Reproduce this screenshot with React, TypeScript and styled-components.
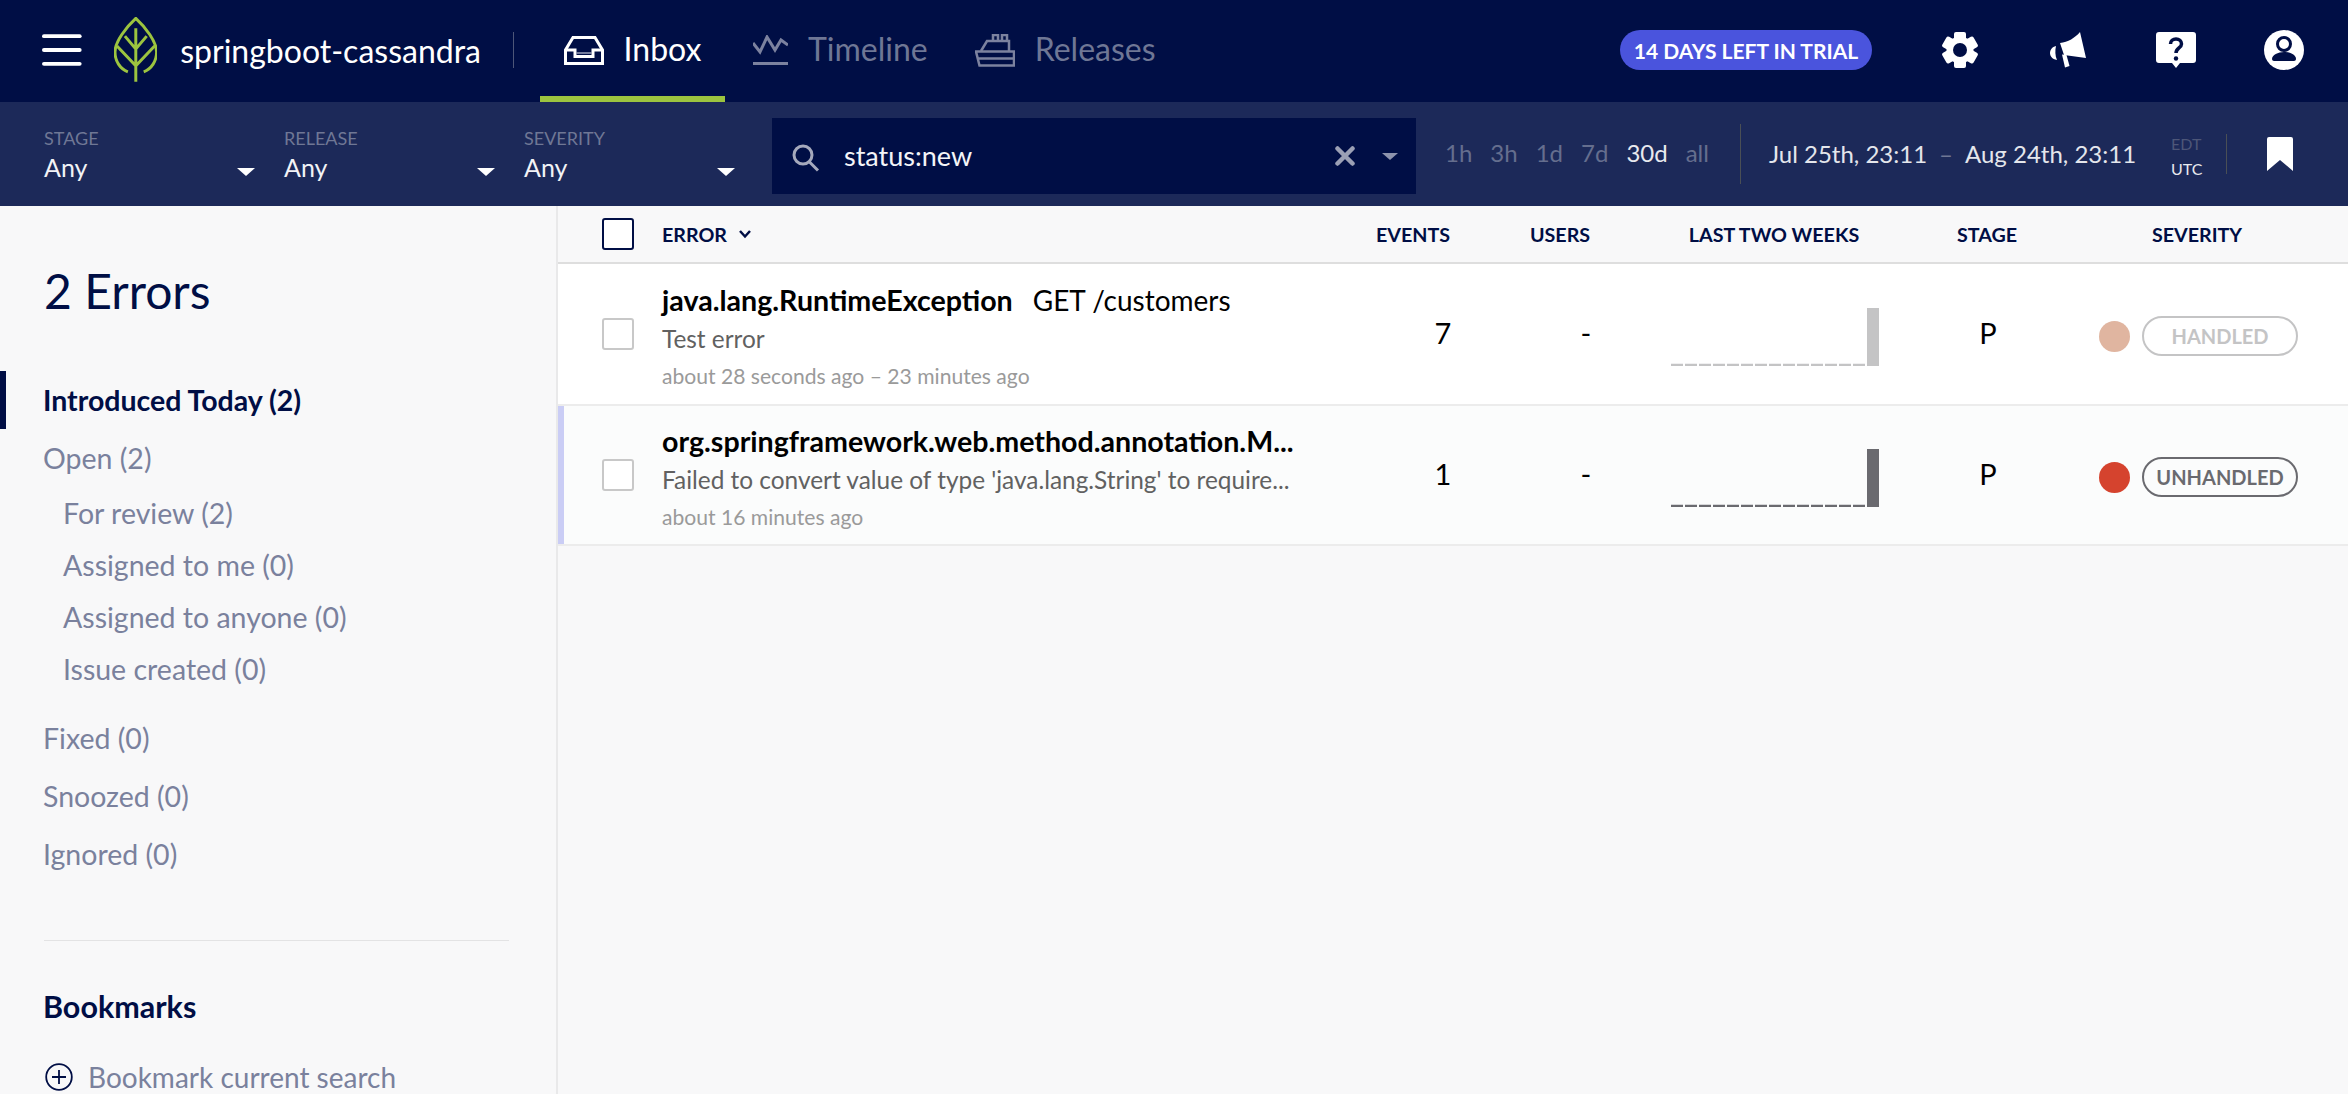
import React from 'react';
import styled, { createGlobalStyle } from 'styled-components';

const FONT = `"Lato", "Liberation Sans", sans-serif`;

const Global = createGlobalStyle`
  html, body { margin: 0; padding: 0; height: 100%; background: #f8f8f9; overflow: hidden; }
  body { font-family: ${FONT}; }
  * { box-sizing: border-box; }
`;

const Page = styled.div`
  width: 2348px;
  height: 1094px;
  overflow: hidden;
  display: flex;
  flex-direction: column;
`;

const TopNav = styled.header`
  height: 102px;
  flex: none;
  background: #000e45;
  display: flex;
  align-items: stretch;
  padding-left: 42px;
  color: #fff;
`;

const Brand = styled.div`
  display: flex;
  align-items: center;
  width: 472px;
  flex: none;
  margin-top: -2px;
`;

const ProjectName = styled.span`
  font-size: 32px;
  margin-left: 23px;
  white-space: nowrap;
`;

const BrandDivider = styled.span`
  width: 1px;
  height: 36px;
  background: #4d5678;
  margin-left: 32px;
`;

const NavTabs = styled.nav`
  display: flex;
  margin-left: 26px;
`;

const NavTab = styled.a<{ $active?: boolean }>`
  width: ${p => (p.$active ? '185px' : 'auto')};
  margin-right: ${p => (p.$active ? '28px' : '47px')};
  display: flex;
  align-items: center;
  justify-content: ${p => (p.$active ? 'center' : 'flex-start')};
  gap: 20px;
  font-size: 32px;
  color: ${p => (p.$active ? '#fff' : '#6f7795')};
  border-bottom: 6px solid ${p => (p.$active ? '#9cc43f' : 'transparent')};
  & > svg { margin-top: 4px; }
`;

const NavRight = styled.div`
  margin-left: auto;
  display: flex;
  align-items: center;
  padding: 0 44px 0 0;
  margin-top: -2px;
`;

const TrialPill = styled.span`
  width: 252px;
  height: 40px;
  border-radius: 20px;
  background: #4a54dd;
  font-size: 21px;
  font-weight: 700;
  display: flex;
  align-items: center;
  justify-content: center;
  white-space: nowrap;
  margin-right: 70px;
`;

const IconSlot = styled.span<{ $w: number; $mr?: number }>`
  width: ${p => p.$w}px;
  margin-right: ${p => p.$mr ?? 0}px;
  display: flex;
  justify-content: center;
`;

const FilterBar = styled.div`
  height: 104px;
  flex: none;
  background: #1c2959;
  display: flex;
  align-items: center;
  padding-left: 44px;
  color: #fff;
`;

const FilterSelect = styled.div`
  width: 240px;
  flex: none;
  position: relative;
  height: 56px;
  margin-top: 4px;
`;

const FilterLabel = styled.div`
  font-size: 18px;
  line-height: 20px;
  color: #6f7795;
`;

const FilterValue = styled.div`
  font-size: 25px;
  line-height: 32px;
  margin-top: 3px;
  color: #f2f3f6;
`;

const Caret = styled.span<{ $color?: string; $size?: number }>`
  display: block;
  width: 0;
  height: 0;
  border-left: ${p => p.$size ?? 9}px solid transparent;
  border-right: ${p => p.$size ?? 9}px solid transparent;
  border-top: ${p => ((p.$size ?? 9) * 0.85).toFixed(0)}px solid ${p => p.$color ?? '#fff'};
`;

const SelectCaret = styled(Caret)`
  position: absolute;
  right: 29px;
  top: 40px;
`;

const SearchBox = styled.div`
  width: 644px;
  height: 76px;
  flex: none;
  margin: 4px 0 0 8px;
  background: #000e45;
  display: flex;
  align-items: center;
  padding: 0 18px 0 20px;
`;

const SearchText = styled.span`
  font-size: 27px;
  margin-left: 24px;
  margin-bottom: 2px;
  flex: 1;
  color: #f4f5f8;
`;

const TimeButtons = styled.div`
  display: flex;
  margin-left: 29px;
  gap: 18px;
  width: 296px;
  flex: none;
  height: 60px;
  align-items: center;
  border-right: 1px solid #4a4f55;
  padding-bottom: 4px;
`;

const TimeButton = styled.span<{ $active?: boolean }>`
  font-size: 24px;
  color: ${p => (p.$active ? '#e8e9ee' : '#656e8e')};
`;

const DateRange = styled.div`
  margin-left: 28px;
  width: 402px;
  flex: none;
  display: flex;
  gap: 12px;
  font-size: 24px;
  color: #e4e6ec;
  white-space: nowrap;
  padding-bottom: 2px;
`;

const DateDash = styled.span`
  color: #6f7795;
`;

const Zones = styled.div`
  display: flex;
  flex-direction: column;
  gap: 8px;
  width: 56px;
  flex: none;
  height: 40px;
  padding-top: 3px;
  justify-content: center;
  border-right: 1px solid #4a4f55;
`;

const Zone = styled.span<{ $active?: boolean }>`
  font-size: 16px;
  line-height: 17px;
  color: ${p => (p.$active ? '#e8e9ee' : '#4d5678')};
`;

const BookmarkSlot = styled.span`
  margin-left: 40px;
  display: flex;
`;

const Body = styled.div`
  flex: 1;
  display: flex;
  min-height: 0;
`;

const Sidebar = styled.aside`
  width: 558px;
  flex: none;
  background: #f8f8f9;
  border-right: 2px solid #e9e9ea;
  padding: 56px 0 0 0;
`;

const SideTitle = styled.h1`
  margin: 0 0 51px 44px;
  font-size: 48px;
  line-height: 58px;
  font-weight: 400;
  color: #000e45;
`;

const SideItem = styled.div<{ $active?: boolean; $sub?: boolean; $mt?: number; $h?: number }>`
  font-size: 28.5px;
  height: ${p => p.$h ?? 58}px;
  margin-top: ${p => p.$mt ?? 0}px;
  display: flex;
  align-items: center;
  padding-left: ${p => (p.$sub ? 63 : p.$active ? 37 : 43)}px;
  color: ${p => (p.$active ? '#000e45' : '#7a819d')};
  font-weight: ${p => (p.$active ? 700 : 400)};
  border-left: ${p => (p.$active ? '6px solid #000e45' : 'none')};
`;

const SideDivider = styled.hr`
  border: none;
  height: 1px;
  background: #e3e3e4;
  margin: 57px 47px 0 44px;
`;

const SideHeading = styled.h2`
  margin: 47px 0 0 43px;
  font-size: 30.5px;
  line-height: 36px;
  font-weight: 700;
  color: #000e45;
`;

const AddBookmark = styled.div`
  margin: 36px 0 0 45px;
  display: flex;
  align-items: center;
  gap: 15px;
  font-size: 28px;
  color: #7a819d;
`;

const Main = styled.main`
  flex: 1;
  min-width: 0;
`;

const TableHead = styled.div`
  display: grid;
  grid-template-columns: 104px 678px 146px 148px 280px 146px 274px;
  align-items: center;
  height: 58px;
  background: #f8f8f9;
  border-bottom: 2px solid #dedede;
`;

const HeadCell = styled.div<{ $center?: boolean }>`
  font-size: 19.7px;
  font-weight: 700;
  color: #000e45;
  display: flex;
  align-items: center;
  gap: 12px;
  justify-content: ${p => (p.$center ? 'center' : 'flex-start')};
  white-space: nowrap;
`;

const CheckCell = styled.div`
  display: flex;
  justify-content: flex-end;
  padding-right: 28px;
`;

const Check = styled.span<{ $head?: boolean }>`
  width: 32px;
  height: 32px;
  border-radius: 3px;
  background: #fff;
  border: 2px solid ${p => (p.$head ? '#000e45' : '#c8c8c8')};
`;

const Row = styled.div<{ $unseen?: boolean }>`
  display: grid;
  grid-template-columns: 104px 678px 206px 80px 282px 160px 1fr;
  align-items: center;
  height: ${p => (p.$unseen ? 140 : 142)}px;
  background: ${p => (p.$unseen ? '#fbfcfc' : '#fff')};
  border-bottom: 2px solid #ececec;
  box-shadow: ${p => (p.$unseen ? 'inset 6px 0 0 #cacdf5' : 'none')};
`;

const Summary = styled.div`
  min-width: 0;
  padding-top: 6px;
`;

const TitleLine = styled.div`
  display: flex;
  font-size: 28.6px;
  line-height: 36px;
  color: #000;
  white-space: nowrap;
`;

const ErrorName = styled.strong`
  font-weight: 700;
`;

const Route = styled.span`
  margin-left: 20px;
  font-size: 28px;
`;

const Message = styled.div`
  font-size: 24.4px;
  line-height: 34px;
  margin-top: 4px;
  color: #616161;
  white-space: nowrap;
`;

const Age = styled.div`
  font-size: 21.1px;
  line-height: 32px;
  margin-top: 4px;
  color: #9a9a9a;
`;

const Metric = styled.div`
  font-size: 29px;
  color: #000;
  text-align: center;
  padding-bottom: 3px;
`;

const Chart = styled.svg`
  display: block;
  margin: 6px 0 0 45px;
`;

const SeverityCell = styled.div`
  display: flex;
  align-items: center;
  gap: 12px;
  margin: 4px 0 0 31px;
`;

const Dot = styled.span<{ $color: string }>`
  width: 31px;
  height: 31px;
  border-radius: 50%;
  background: ${p => p.$color};
  flex: none;
`;

const Badge = styled.span<{ $color: string }>`
  width: 156px;
  height: 40px;
  border-radius: 20px;
  border: 2px solid ${p => p.$color};
  color: ${p => p.$color};
  font-size: 20px;
  font-weight: 700;
  display: flex;
  align-items: center;
  justify-content: center;
`;

const NAV_GREY = '#7c829f';

const Hamburger = () => (
  <svg width="40" height="32" viewBox="0 0 40 32" fill="#fff">
    <rect y="0" width="40" height="4" rx="2" />
    <rect y="14" width="40" height="4" rx="2" />
    <rect y="28" width="40" height="4" rx="2" />
  </svg>
);

const Leaf = () => (
  <svg width="44" height="66" viewBox="0 0 44 66" fill="none" stroke="#9cc43f" strokeWidth="3" style={{ marginLeft: 32 }}>
    <path d="M22 65V11M11 19l11 13 11-13M3 29l19 20 19-20" />
    <path d="M14 55C6 52 1 44 1 35 1 25 12 10 22 1c10 9 21 24 21 34 0 9-5 17-13 20" />
  </svg>
);

const InboxIcon = () => (
  <svg width="40" height="29" viewBox="0 0 40 29" fill="none" stroke="#fff" strokeWidth="3">
    <path d="M1.500 27.500V14L9 1.500h22L38.500 14v13.500z" />
    <path d="M1.500 14H11v6.500h18V14h9.500" />
    <path d="M12 17h16" stroke="#9aa0b8" strokeWidth="1.500" />
  </svg>
);

const TimelineIcon = () => (
  <svg width="35" height="30" viewBox="0 0 35 30" fill="none" stroke={NAV_GREY} strokeWidth="3">
    <path d="M0 8l7 9 7-15 8 13 6-10 7 5" />
    <path d="M0 28.500h35" />
  </svg>
);

const ReleasesIcon = () => (
  <svg width="40" height="33" viewBox="0 0 40 33" fill="none" stroke={NAV_GREY} strokeWidth="2.500">
    <path d="M18 7V1h5v6M27 7V1h5v6" />
    <path d="M6 17l6-10h22v10" />
    <path d="M1 17.500h38v14H4.500zM3 24.500h36" />
  </svg>
);

const Gear = () => (
  <svg width="36" height="36" viewBox="-18 -18 36 36" fill="#fff">
    <circle r="13.500" />
    <rect x="-6" y="-18" width="12" height="36" rx="2" />
    <rect x="-6" y="-18" width="12" height="36" rx="2" transform="rotate(60)" />
    <rect x="-6" y="-18" width="12" height="36" rx="2" transform="rotate(120)" />
    <circle r="7" fill="#000e45" />
  </svg>
);

const Megaphone = () => (
  <svg width="36" height="36" viewBox="0 0 36 36" fill="#fff">
    <path d="M30 0l6 26-22-3-4-12C18 10 25 6 30 0z" />
    <path d="M12 22.500l4.500.500 3 11-4.500 1.500z" />
    <path d="M6 14C2 15 0 18 0 21c0 3 2 6 7 7C5 24 5 18 6 14z" />
  </svg>
);

const Help = () => (
  <svg width="40" height="36" viewBox="0 0 40 36">
    <path fill="#fff" d="M3 0h34a3 3 0 0 1 3 3v25a3 3 0 0 1-3 3H24l-4 5-4-5H3a3 3 0 0 1-3-3V3a3 3 0 0 1 3-3z" />
    <path fill="none" stroke="#000e45" strokeWidth="3.500" d="M14.500 12c0-3 2.500-5 5.500-5s5.500 2 5.500 5c0 4-5.500 4-5.500 9" />
    <circle cx="20" cy="26.500" r="2.200" fill="#000e45" />
  </svg>
);

const User = () => (
  <svg width="40" height="40" viewBox="0 0 40 40">
    <circle cx="20" cy="20" r="20" fill="#fff" />
    <circle cx="20" cy="14" r="6.500" fill="none" stroke="#000e45" strokeWidth="3" />
    <path fill="#000e45" d="M10 31c-1 0-2-1-2-2 0-4 6-7 12-7s12 3 12 7c0 1-1 2-2 2z" />
  </svg>
);

const SearchIcon = () => (
  <svg width="28" height="28" viewBox="0 0 28 28" fill="none" stroke="#a5a9bc" strokeWidth="3" style={{ marginTop: 4 }}>
    <circle cx="11" cy="11" r="9" />
    <path d="M17 17.500l9 9" />
  </svg>
);

const ClearIcon = () => (
  <svg width="20" height="20" viewBox="0 0 20 20" stroke="#9ba0b5" strokeWidth="4.500" strokeLinecap="round" style={{ marginRight: 27 }}>
    <path d="M2.500 2.500l15 15M17.500 2.500l-15 15" />
  </svg>
);

const BookmarkIcon = () => (
  <svg width="26" height="34" viewBox="0 0 26 34">
    <path fill="#fff" d="M2 0h22a2 2 0 0 1 2 2v32L13 23 0 34V2a2 2 0 0 1 2-2z" />
  </svg>
);

const Chevron = () => (
  <svg width="12" height="9" viewBox="0 0 12 9" fill="none" stroke="#000e45" strokeWidth="2.500">
    <path d="M1 1l5 5.500L11 1" />
  </svg>
);

const PlusCircle = () => (
  <svg width="28" height="28" viewBox="0 0 28 28" fill="none" stroke="#000e45" strokeWidth="1.800">
    <circle cx="14" cy="14" r="12.800" />
    <path d="M14 7v14M7 14h14" />
  </svg>
);

const Spark = ({ color }: { color: string }) => (
  <Chart width="208" height="58" viewBox="0 0 208 58">
    <path d="M0 57H195" stroke={color} strokeWidth="2.500" strokeDasharray="12 2" fill="none" />
    <rect x="196" y="0" width="12" height="58" fill={color} />
  </Chart>
);

const filters = ['STAGE', 'RELEASE', 'SEVERITY'];
const times = ['1h', '3h', '1d', '7d', '30d', 'all'];

const rows = [
  {
    name: 'java.lang.RuntimeException', route: 'GET /customers', msg: 'Test error',
    age: 'about 28 seconds ago – 23 minutes ago', count: '7', spark: '#c4c4c5',
    dot: '#e0b5a0', badge: 'HANDLED', badgeColor: '#c4c4c5', unseen: false,
  },
  {
    name: 'org.springframework.web.method.annotation.M...', route: '',
    msg: "Failed to convert value of type 'java.lang.String' to require...",
    age: 'about 16 minutes ago', count: '1', spark: '#6a6a6f',
    dot: '#d5432e', badge: 'UNHANDLED', badgeColor: '#6a6a6f', unseen: true,
  },
];

export default function App() {
  return (
    <Page>
      <Global />
      <TopNav>
        <Brand>
          <Hamburger />
          <Leaf />
          <ProjectName>springboot-cassandra</ProjectName>
          <BrandDivider />
        </Brand>
        <NavTabs>
          <NavTab $active><InboxIcon />Inbox</NavTab>
          <NavTab><TimelineIcon />Timeline</NavTab>
          <NavTab><ReleasesIcon />Releases</NavTab>
        </NavTabs>
        <NavRight>
          <TrialPill>14 DAYS LEFT IN TRIAL</TrialPill>
          <IconSlot $w={36} $mr={72}><Gear /></IconSlot>
          <IconSlot $w={36} $mr={70}><Megaphone /></IconSlot>
          <IconSlot $w={40} $mr={68}><Help /></IconSlot>
          <IconSlot $w={40}><User /></IconSlot>
        </NavRight>
      </TopNav>
      <FilterBar>
        {filters.map(f => (
          <FilterSelect key={f}>
            <FilterLabel>{f}</FilterLabel>
            <FilterValue>Any</FilterValue>
            <SelectCaret />
          </FilterSelect>
        ))}
        <SearchBox>
          <SearchIcon />
          <SearchText>status:new</SearchText>
          <ClearIcon />
          <Caret $size={8} $color="#8d93ad" />
        </SearchBox>
        <TimeButtons>
          {times.map(t => <TimeButton key={t} $active={t === '30d'}>{t}</TimeButton>)}
        </TimeButtons>
        <DateRange>
          <span>Jul 25th, 23:11</span>
          <DateDash>–</DateDash>
          <span>Aug 24th, 23:11</span>
        </DateRange>
        <Zones>
          <Zone>EDT</Zone>
          <Zone $active>UTC</Zone>
        </Zones>
        <BookmarkSlot><BookmarkIcon /></BookmarkSlot>
      </FilterBar>
      <Body>
        <Sidebar>
          <SideTitle>2 Errors</SideTitle>
          <SideItem $active>Introduced Today (2)</SideItem>
          <SideItem>Open (2)</SideItem>
          <SideItem $sub $h={52}>For review (2)</SideItem>
          <SideItem $sub $h={52}>Assigned to me (0)</SideItem>
          <SideItem $sub $h={52}>Assigned to anyone (0)</SideItem>
          <SideItem $sub $h={52}>Issue created (0)</SideItem>
          <SideItem $mt={14}>Fixed (0)</SideItem>
          <SideItem>Snoozed (0)</SideItem>
          <SideItem>Ignored (0)</SideItem>
          <SideDivider />
          <SideHeading>Bookmarks</SideHeading>
          <AddBookmark><PlusCircle />Bookmark current search</AddBookmark>
        </Sidebar>
        <Main>
          <TableHead>
            <CheckCell><Check $head /></CheckCell>
            <HeadCell>ERROR <Chevron /></HeadCell>
            <HeadCell $center>EVENTS</HeadCell>
            <HeadCell $center>USERS</HeadCell>
            <HeadCell $center>LAST TWO WEEKS</HeadCell>
            <HeadCell $center>STAGE</HeadCell>
            <HeadCell $center>SEVERITY</HeadCell>
          </TableHead>
          {rows.map(r => (
            <Row key={r.name} $unseen={r.unseen}>
              <CheckCell><Check /></CheckCell>
              <Summary>
                <TitleLine>
                  <ErrorName>{r.name}</ErrorName>
                  {r.route && <Route>{r.route}</Route>}
                </TitleLine>
                <Message>{r.msg}</Message>
                <Age>{r.age}</Age>
              </Summary>
              <Metric>{r.count}</Metric>
              <Metric>-</Metric>
              <Spark color={r.spark} />
              <Metric>P</Metric>
              <SeverityCell>
                <Dot $color={r.dot} />
                <Badge $color={r.badgeColor}>{r.badge}</Badge>
              </SeverityCell>
            </Row>
          ))}
        </Main>
      </Body>
    </Page>
  );
}
